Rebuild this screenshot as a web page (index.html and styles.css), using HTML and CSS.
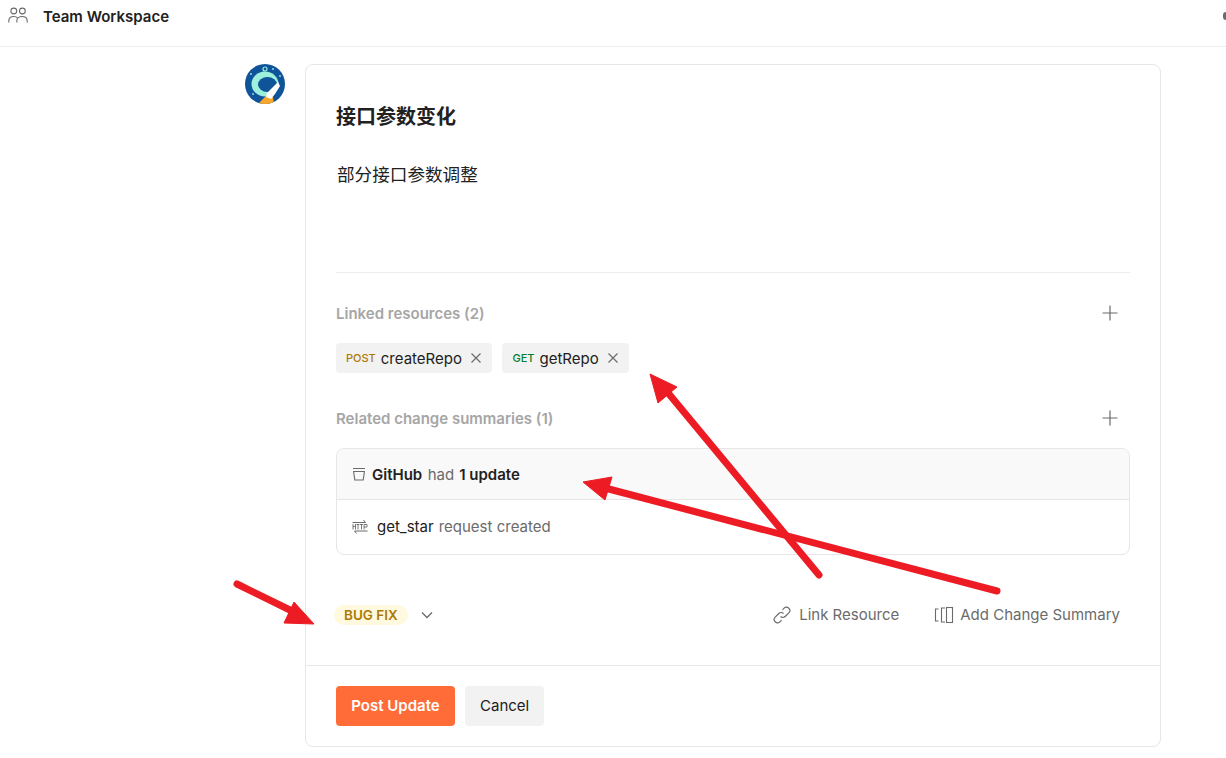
FILE: index.html
```html
<!DOCTYPE html>
<html lang="en">
<head>
<meta charset="utf-8">
<title>Team Workspace</title>
<link rel="stylesheet" href="styles.css">
</head>
<body>
<header class="topbar">
  <svg class="topbar-icon" width="20" height="20" viewBox="0 0 20 20" fill="none" stroke="#6b6b6b" stroke-width="1.1">
    <circle cx="5.800" cy="5" r="2.900"/>
    <circle cx="14.400" cy="5" r="2.900"/>
    <path d="M0.800 16.500v-1.600c0-2.700 2-4.400 5-4.400 1.700 0 2.900.5 3.700 1.400"/>
    <path d="M8.800 16.500v-1.600c0-2.700 2.400-4.400 5.400-4.400 3 0 5 1.700 5 4.400v1.600"/>
  </svg>
  <span class="topbar-title">Team Workspace</span>
  <span class="topbar-edge"></span>
</header>
<main class="page">
  <svg class="avatar" width="40" height="40" viewBox="0 0 40 40">
    <defs><clipPath id="avatar-clip"><circle cx="20" cy="20" r="20"/></clipPath></defs>
    <g clip-path="url(#avatar-clip)">
      <rect width="40" height="40" fill="#0f5499"/>
      <ellipse cx="20" cy="20" rx="13.500" ry="12.500" fill="#9cf0dc"/>
      <ellipse cx="22.500" cy="20.500" rx="9.500" ry="7.500" fill="#0f5499"/>
      <path d="M30 26l6 1-5 9-9 0z" fill="#0f5499"/>
      <circle cx="20" cy="5" r="2" fill="none" stroke="#9cf0dc" stroke-width="1.200"/>
      <circle cx="6" cy="10" r="1" fill="#8fd8e8"/>
      <circle cx="28" cy="5" r="1" fill="#8fd8e8"/>
      <circle cx="35" cy="12" r="1" fill="#8fd8e8"/>
      <circle cx="8" cy="30" r="1" fill="#8fd8e8"/>
      <path d="M12 41l10-10 6 2 1 8z" fill="#f9a72b"/>
      <path d="M33 18l2 4-5 8-4 5-5-2 1-4 5-5z" fill="#ffffff"/>
    </g>
  </svg>
  <section class="card">
    <div class="editor">
      <h1 class="title">接口参数变化</h1>
      <p class="desc">部分接口参数调整</p>
    </div>
    <div class="section-head first">
      <span class="section-label">Linked resources (2)</span>
      <svg class="plus" width="16" height="16" viewBox="0 0 16 16" stroke="#6b6b6b" stroke-width="1.2"><path d="M8 .5v15M.5 8h15"/></svg>
    </div>
    <div class="chips">
      <span class="chip">
        <span class="method post">POST</span><span class="chip-name">createRepo</span>
        <svg class="chip-x" width="10" height="10" viewBox="0 0 10 10" stroke="#6b6b6b" stroke-width="1.2"><path d="M.5.5l9 9M9.500.5l-9 9"/></svg>
      </span>
      <span class="chip">
        <span class="method get">GET</span><span class="chip-name">getRepo</span>
        <svg class="chip-x" width="10" height="10" viewBox="0 0 10 10" stroke="#6b6b6b" stroke-width="1.2"><path d="M.5.5l9 9M9.500.5l-9 9"/></svg>
      </span>
    </div>
    <div class="section-head second">
      <span class="section-label">Related change summaries (1)</span>
      <svg class="plus" width="16" height="16" viewBox="0 0 16 16" stroke="#6b6b6b" stroke-width="1.2"><path d="M8 .5v15M.5 8h15"/></svg>
    </div>
    <div class="summary">
      <div class="summary-head">
        <svg class="summary-icon" width="14" height="14" viewBox="0 0 14 14" fill="none" stroke="#6b6b6b" stroke-width="1.1"><path d="M1 1.500h12M1.600 4.500h10.800L11.200 13H2.800z"/></svg>
        <strong>GitHub</strong><span class="muted">had</span><strong>1 update</strong>
      </div>
      <div class="summary-row">
        <svg class="http-icon" width="16" height="15" viewBox="0 0 16 15" fill="none" stroke="#6b6b6b" stroke-width="1"><path d="M.5 3.500h13l-2-2.500M15.500 12H2.500l2 2.500"/><path d="M1 5v5.500M3.500 5v5.500M1 7.500h2.500M4.500 5.500h3M6 5.500v5M8 5.500h3M9.500 5.500v5M12 10.500v-5h3v2.500h-3" stroke-width=".9"/></svg>
        <span class="row-name">get_star</span><span class="row-note">request created</span>
      </div>
    </div>
    <div class="meta">
      <span class="tag">BUG FIX</span>
      <svg class="chevron" width="12" height="8" viewBox="0 0 12 8" fill="none" stroke="#6b6b6b" stroke-width="1.3"><path d="M1 1.500l5 5 5-5"/></svg>
      <span class="meta-action push">
        <svg width="20" height="20" viewBox="0 0 20 20" fill="none" stroke="#6b6b6b" stroke-width="1.2"><path d="M8.500 11.500a3.300 3.300 0 0 0 4.700 0l3.600-3.600a3.300 3.300 0 0 0-4.700-4.700l-1.600 1.600"/><path d="M11.500 8.500a3.300 3.300 0 0 0-4.700 0l-3.600 3.600a3.300 3.300 0 0 0 4.700 4.700l1.600-1.600"/></svg>
        Link Resource
      </span>
      <span class="meta-action tight">
        <svg width="20" height="18" viewBox="0 0 20 18" fill="none" stroke="#6b6b6b" stroke-width="1.1"><rect x="12.500" y="1.500" width="6" height="15"/><path d="M11 2H7.500v14H11M4.500 3H1.500v12h3"/></svg>
        Add Change Summary
      </span>
    </div>
    <div class="actions">
      <button class="btn primary" type="button">Post Update</button>
      <button class="btn secondary" type="button">Cancel</button>
    </div>
  </section>
</main>
<svg class="annotations" width="1226" height="758" viewBox="0 0 1226 758">
  <g fill="#ed1c24" stroke="#ed1c24">
    <path d="M819 575L664 388" stroke-width="7" stroke-linecap="round"/>
    <path d="M650 374l27 13-19 16z" stroke-width="1"/>
    <path d="M997 591L605 488" stroke-width="7" stroke-linecap="round"/>
    <path d="M583 482l29-5-7 23z" stroke-width="1"/>
    <path d="M237 584L294 612" stroke-width="7" stroke-linecap="round"/>
    <path d="M314 624l-30-1 10-21z" stroke-width="1"/>
  </g>
</svg>
</body>
</html>
```
FILE: styles.css
```css
* {
  box-sizing: border-box;
}

html,
body {
  margin: 0;
  height: 758px;
  overflow: hidden;
  background: #ffffff;
}

body {
  position: relative;
  font-family: Inter, "Noto Sans CJK SC", sans-serif;
  font-size: 15px;
  color: #212121;
}

.topbar {
  display: flex;
  align-items: center;
  height: 47px;
  padding: 0 0 14px 8px;
  border-bottom: 1px solid #ededed;
}

.topbar-icon {
  flex: none;
}

.topbar-title {
  margin-left: 15px;
  font-weight: 600;
}

.topbar-edge {
  width: 3px;
  height: 8px;
  margin-left: auto;
  border-radius: 3px 0 0 3px;
  background: #6b6b6b;
}

.page {
  display: flex;
  align-items: flex-start;
  gap: 20px;
  padding: 17px 0 0 245px;
}

.avatar {
  flex: none;
}

.card {
  display: flex;
  flex-direction: column;
  width: 856px;
  height: 683px;
  border: 1px solid #e6e6e6;
  border-radius: 8px;
}

.editor {
  height: 208px;
  margin: 0 30px;
  padding-top: 38px;
  border-bottom: 1px solid #ededed;
}

.title {
  margin: 0;
  font-size: 20px;
  line-height: 28px;
  font-weight: 700;
}

.desc {
  margin: 30px 0 0 1px;
  font-size: 17.600px;
  line-height: 28px;
}

.section-head {
  display: flex;
  align-items: center;
  justify-content: space-between;
  height: 20px;
  margin: 0 30px;
}

.section-head.first {
  margin-top: 30px;
}

.section-head.second {
  margin-top: 35px;
}

.plus {
  margin-right: 12px;
}

.section-label {
  font-weight: 600;
  color: #a6a6a6;
}

.chips {
  display: flex;
  gap: 10px;
  margin: 20px 30px 0;
}

.chip {
  display: flex;
  align-items: center;
  height: 30px;
  padding: 0 11px 0 10px;
  border-radius: 4px;
  background: #f2f2f2;
}

.method {
  margin-right: 5px;
  font-size: 11px;
  font-weight: 500;
}

.method.post {
  color: #ad7a03;
}

.method.get {
  color: #007f31;
}

.chip-x {
  margin-left: 9.500px;
}

.summary {
  height: 107px;
  margin: 20px 30px 0;
  border: 1px solid #e6e6e6;
  border-radius: 8px;
  overflow: hidden;
}

.summary-head {
  display: flex;
  align-items: center;
  height: 51px;
  padding-left: 15px;
  background: #f9f9f9;
  border-bottom: 1px solid #e6e6e6;
}

.summary-head strong {
  font-weight: 600;
}

.summary-icon {
  margin-right: 6px;
}

.muted {
  margin: 0 5px 0 5.500px;
  color: #6b6b6b;
}

.summary-row {
  display: flex;
  align-items: center;
  height: 54px;
  padding: 0 0 2px 15px;
}

.http-icon {
  margin-right: 9px;
}

.row-note {
  margin-left: 5px;
  color: #6b6b6b;
}

.meta {
  display: flex;
  align-items: center;
  height: 30px;
  margin: 45px 30px 0 28px;
  padding-right: 10px;
  color: #6b6b6b;
}

.tag {
  padding: 0 10px;
  font-size: 13.500px;
  font-weight: 600;
  line-height: 20px;
  border-radius: 10px;
  color: #ad7a03;
  background: #fff9e0;
}

.chevron {
  margin-left: 13px;
}

.meta-action {
  display: flex;
  align-items: center;
  gap: 7px;
  margin-left: 35px;
  padding-bottom: 1px;
}

.meta-action.push {
  margin-left: auto;
}

.meta-action.tight {
  gap: 6px;
  margin-left: 35px;
}

.actions {
  display: flex;
  gap: 10px;
  margin-top: 35px;
  padding: 20px 30px;
  border-top: 1px solid #e6e6e6;
}

.btn {
  height: 40px;
  padding: 0 15px 1px;
  border: 0;
  border-radius: 4px;
  font: inherit;
}

.btn.primary {
  width: 119px;
  font-weight: 600;
  color: #ffffff;
  background: #ff6c37;
}

.btn.secondary {
  width: 79px;
  color: #212121;
  background: #f2f2f2;
}

.annotations {
  position: absolute;
  top: 0;
  left: 0;
  pointer-events: none;
}
```
